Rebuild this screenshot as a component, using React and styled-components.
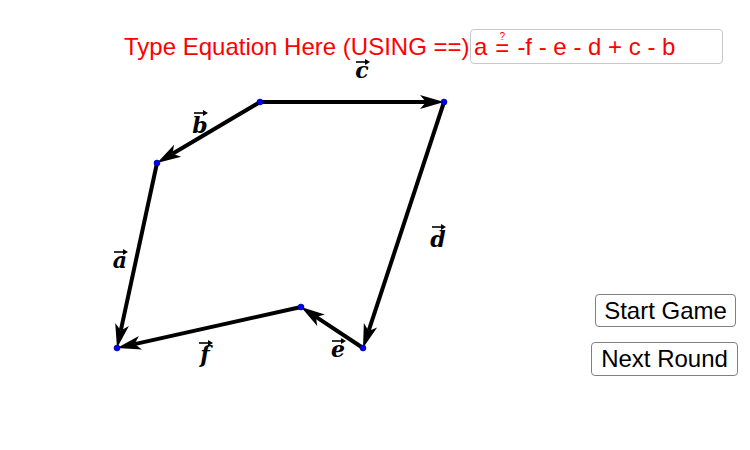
import React from 'react';
import styled, { createGlobalStyle } from 'styled-components';

const GlobalStyle = createGlobalStyle`
  html, body { margin: 0; padding: 0; background: #fff; }
  body { font-family: "Liberation Sans", Arial, sans-serif; }
`;

const Canvas = styled.div`
  position: relative;
  width: 750px;
  height: 450px;
  background: #ffffff;
  overflow: hidden;
`;

const Drawing = styled.svg`
  position: absolute;
  left: 0;
  top: 0;
`;

const Prompt = styled.div`
  position: absolute;
  left: 124px;
  top: 33px;
  color: #ff0000;
  font-size: 24px;
  white-space: nowrap;
`;

const EquationBox = styled.div`
  position: absolute;
  left: 470px;
  top: 29px;
  width: 253px;
  height: 35px;
  box-sizing: border-box;
  border: 1px solid #c8c8c8;
  border-radius: 4px;
  padding: 1px 0 0 3px;
  display: flex;
  align-items: center;
  color: #ff0000;
  font-size: 24px;
  white-space: nowrap;
`;

const QEq = styled.span`
  position: relative;
  display: inline-block;
  margin: 0 8px 0 8px;
  transform: translateY(1px);
  &::before {
    content: "?";
    position: absolute;
    font-size: 10px;
    left: 50%;
    top: -3px;
    transform: translateX(-50%);
  }
`;

const GameButton = styled.button`
  position: absolute;
  left: ${p => p.$x}px;
  top: ${p => p.$y}px;
  width: ${p => p.$w}px;
  height: ${p => p.$h}px;
  box-sizing: border-box;
  background: #ffffff;
  border: 1px solid #808080;
  border-radius: 4px;
  font-family: "Liberation Sans", Arial, sans-serif;
  font-size: 24px;
  color: #000;
  padding: 0;
`;

const points = {
  P1: [260, 102],
  P2: [444, 102],
  P3: [363, 348],
  P4: [301, 307],
  P5: [117, 348],
  P6: [157, 163],
};

const vectors = [
  ['P1', 'P6'],
  ['P1', 'P2'],
  ['P2', 'P3'],
  ['P3', 'P4'],
  ['P4', 'P5'],
  ['P6', 'P5'],
];

const labels = [
  { t: 'c', x: 362, y: 78, ay: 62 },
  { t: 'b', x: 200, y: 133, ay: 113 },
  { t: 'd', x: 438, y: 247, ay: 227 },
  { t: 'a', x: 120, y: 268, ay: 252 },
  { t: 'f', x: 205, y: 362, ay: 343 },
  { t: 'e', x: 338, y: 357, ay: 341 },
];

function Arrow({ from, to }) {
  const [x1, y1] = from;
  const [x2, y2] = to;
  const dx = x2 - x1, dy = y2 - y1;
  const len = Math.hypot(dx, dy);
  const ux = dx / len, uy = dy / len;
  const nx = -uy, ny = ux;
  const L = 24, W = 7;
  const bx = x2 - ux * L, by = y2 - uy * L;
  const mx = x2 - ux * L * 0.75, my = y2 - uy * L * 0.75;
  const pts = [
    [x2, y2],
    [bx + nx * W, by + ny * W],
    [mx, my],
    [bx - nx * W, by - ny * W],
  ].map(p => p.join(',')).join(' ');
  return (
    <g>
      <line x1={x1} y1={y1} x2={mx} y2={my} stroke="#000" strokeWidth="4" />
      <polygon points={pts} fill="#000" />
    </g>
  );
}

function Label({ t, x, y, ay }) {
  return (
    <g>
      <text
        x={x}
        y={y}
        textAnchor="middle"
        fontFamily='"DejaVu Serif", "Liberation Serif", serif'
        fontStyle="italic"
        fontWeight="bold"
        fontSize="22"
        fill="#000"
      >
        {t}
      </text>
      <line x1={x - 6} y1={ay} x2={x + 5} y2={ay} stroke="#000" strokeWidth="1.6" />
      <polygon points={`${x + 8},${ay} ${x + 3},${ay - 3} ${x + 3},${ay + 3}`} fill="#000" />
    </g>
  );
}

export default function App() {
  return (
    <>
      <GlobalStyle />
      <Canvas>
        <Drawing width="750" height="450" viewBox="0 0 750 450">
          {vectors.map(([a, b]) => (
            <Arrow key={a + b} from={points[a]} to={points[b]} />
          ))}
          {Object.entries(points).map(([k, [x, y]]) => (
            <circle key={k} cx={x} cy={y} r="3" fill="#0000ff" stroke="#000066" strokeWidth="0.6" />
          ))}
          {labels.map(l => (
            <Label key={l.t} {...l} />
          ))}
        </Drawing>
        <Prompt>Type Equation Here (USING ==)</Prompt>
        <EquationBox>
          a<QEq>=</QEq>-f - e - d + c - b
        </EquationBox>
        <GameButton $x={595} $y={294} $w={141} $h={33}>Start Game</GameButton>
        <GameButton $x={591} $y={342} $w={147} $h={34}>Next Round</GameButton>
      </Canvas>
    </>
  );
}
